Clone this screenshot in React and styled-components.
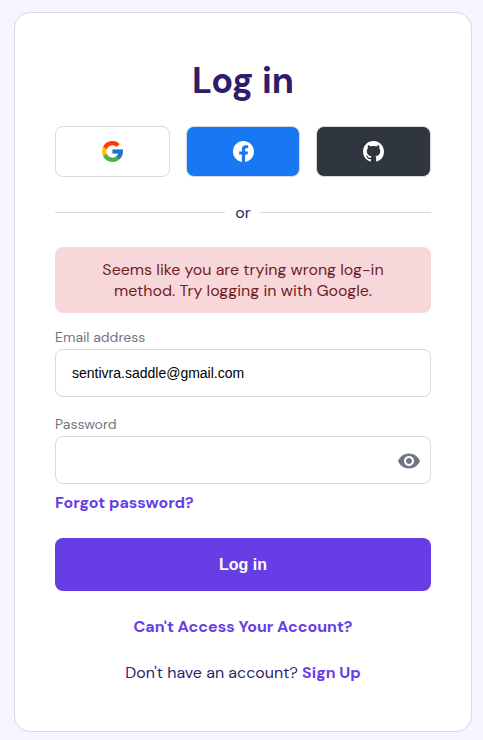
import React, { useState } from "react";
import styled, { createGlobalStyle } from "styled-components";
import { FcGoogle } from "react-icons/fc";
import { BsFacebook, BsGithub } from "react-icons/bs";
import { MdVisibility } from "react-icons/md";

const GlobalStyle = createGlobalStyle`
  *, *::before, *::after { box-sizing: border-box; }
  body {
    margin: 0;
    background: #f5f5ff;
    color: #2f1c6a;
    font-family: "DM Sans", Inter, sans-serif;
    font-size: 16px;
    line-height: 21px;
  }
`;

const Page = styled.main`
  height: 740px;
  padding: 12px 11px 8px 14px;
`;

const Card = styled.section`
  display: flex;
  flex-direction: column;
  height: 720px;
  padding: 0 40px;
  border: 1px solid #d9d9e3;
  border-radius: 16px;
  background: #fff;
`;

const Title = styled.h1`
  margin: 43px 0 0;
  height: 50px;
  font: 700 36px/50px "DM Sans", "Open Sans", sans-serif;
  text-align: center;
`;

const Providers = styled.div`
  display: grid;
  grid-template-columns: repeat(3, 1fr);
  gap: 16px;
  margin-top: 20px;
`;

const ProviderButton = styled.button`
  display: flex;
  align-items: center;
  justify-content: center;
  height: 51px;
  padding: 0 0 0 ${(p) => p.$nudge || "0"};
  border: 1px solid #d9dade;
  border-radius: 8px;
  background: ${(p) => p.$background};
  color: #fff;
`;

const Divider = styled.div`
  display: flex;
  align-items: center;
  height: 21px;
  margin-top: 25px;
  &::before, &::after {
    content: "";
    flex: 1 1 0;
    height: 1px;
    background: #d9dade;
  }
  &::before { margin-right: 10px; }
  &::after { flex-basis: 1px; margin-left: 9px; }
`;

const Alert = styled.div`
  height: 66px;
  margin-top: 24px;
  padding: 12px 40px;
  border-radius: 8px;
  background: #f8d7da;
  color: #721c24;
  text-align: center;
`;

const Field = styled.div`
  margin-top: ${(p) => p.$gap};
`;

const Label = styled.label`
  display: block;
  height: 18px;
  color: #727586;
  font-size: 14px;
  line-height: 18px;
`;

const InputFrame = styled.div`
  display: flex;
  align-items: center;
  height: 48px;
  margin-top: 3px;
  padding: 0 9px 0 16px;
  border: 1px solid #d9dade;
  border-radius: 8px;
`;

const Input = styled.input`
  flex: 1;
  min-width: 0;
  padding: 0;
  border: 0;
  outline: 0;
  background: transparent;
  color: #000;
  font: 14px "Liberation Sans", Arial, sans-serif;
`;

const IconButton = styled.button`
  display: flex;
  padding: 1px 0 0;
  border: 0;
  background: none;
  color: #727586;
`;

const Link = styled.a`
  color: #673de6;
  font-weight: 700;
  text-decoration: none;
`;

const ForgotRow = styled.div`
  margin-top: 8px;
  height: 21px;
`;

const Submit = styled.button`
  height: 53px;
  margin-top: 25px;
  padding: 0;
  border: 0;
  border-radius: 8px;
  background: #673de6;
  color: #fff;
  font: 700 16px "Liberation Sans", Arial, sans-serif;
`;

const Footer = styled.p`
  height: 21px;
  margin: 25px 0 0;
  text-align: center;
`;

export default function App() {
  const [email, setEmail] = useState("sentivra.saddle@gmail.com");
  const [password, setPassword] = useState("");
  const [visible, setVisible] = useState(false);

  return (
    <Page>
      <GlobalStyle />
      <Card>
        <Title>Log in</Title>
        <Providers>
          <ProviderButton $background="#fff" aria-label="Google"><FcGoogle size={25} /></ProviderButton>
          <ProviderButton $background="#1877f2" $nudge="1px" aria-label="Facebook"><BsFacebook size={21} /></ProviderButton>
          <ProviderButton $background="#2f363d" aria-label="GitHub"><BsGithub size={21} /></ProviderButton>
        </Providers>
        <Divider>or</Divider>
        <Alert>Seems like you are trying wrong log-in method. Try logging in with Google.</Alert>
        <Field $gap="15px">
          <Label htmlFor="email">Email address</Label>
          <InputFrame>
            <Input id="email" value={email} onChange={(e) => setEmail(e.target.value)} />
          </InputFrame>
        </Field>
        <Field $gap="18px">
          <Label htmlFor="password">Password</Label>
          <InputFrame>
            <Input id="password" type={visible ? "text" : "password"} value={password} onChange={(e) => setPassword(e.target.value)} />
            <IconButton type="button" aria-label="Show password" onClick={() => setVisible(!visible)}>
              <MdVisibility size={24} />
            </IconButton>
          </InputFrame>
        </Field>
        <ForgotRow><Link href="#">Forgot password?</Link></ForgotRow>
        <Submit>Log in</Submit>
        <Footer><Link href="#">Can't Access Your Account?</Link></Footer>
        <Footer>Don't have an account? <Link href="#">Sign Up</Link></Footer>
      </Card>
    </Page>
  );
}
